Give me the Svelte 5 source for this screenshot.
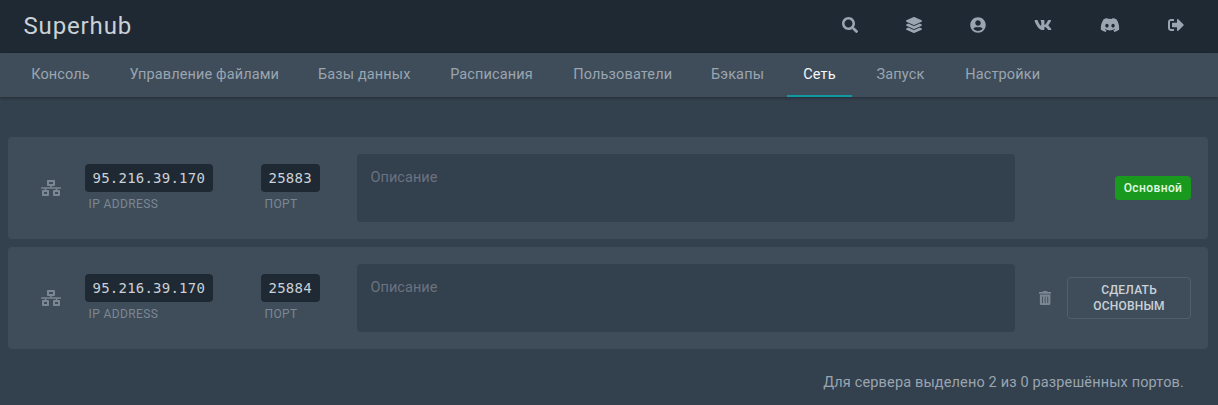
<script>
  const actions = [
    { name: 'Поиск', w: 16, box: '0 0 512 512', d: 'M505 442.7L405.3 343c-4.5-4.5-10.6-7-17-7H372c27.6-35.3 44-79.7 44-128C416 93.1 322.9 0 208 0S0 93.1 0 208s93.1 208 208 208c48.3 0 92.7-16.4 128-44v16.3c0 6.4 2.5 12.5 7 17l99.7 99.7c9.4 9.4 24.6 9.4 33.9 0l28.3-28.3c9.4-9.4 9.4-24.6.1-34zM208 336c-70.7 0-128-57.2-128-128 0-70.7 57.2-128 128-128 70.7 0 128 57.2 128 128 0 70.7-57.2 128-128 128z' },
    { name: 'Серверы', w: 16, box: '0 0 512 512', d: 'M12.41 148.02l232.94 105.67c6.8 3.09 14.49 3.09 21.29 0l232.94-105.67c16.55-7.51 16.55-32.52 0-40.03L266.65 2.31a25.607 25.607 0 0 0-21.29 0L12.41 107.98c-16.55 7.51-16.55 32.53 0 40.04zm487.18 88.28l-58.09-26.33-161.64 73.27c-7.56 3.43-15.59 5.17-23.86 5.17s-16.29-1.74-23.86-5.17L70.51 209.97l-58.1 26.33c-16.55 7.5-16.55 32.5 0 40l232.94 105.59c6.8 3.08 14.49 3.08 21.29 0L499.59 276.3c16.55-7.5 16.55-32.5 0-40zm0 127.8l-57.87-26.23-161.86 73.37c-7.56 3.43-15.59 5.17-23.86 5.17s-16.29-1.74-23.86-5.17L70.29 337.87 12.41 364.1c-16.55 7.5-16.55 32.5 0 40l232.94 105.59c6.8 3.08 14.49 3.08 21.29 0L499.59 404.1c16.55-7.5 16.55-32.5 0-40z' },
    { name: 'Аккаунт', w: 16, box: '0 0 496 512', d: 'M248 8C111 8 0 119 0 256s111 248 248 248 248-111 248-248S385 8 248 8zm0 96c48.6 0 88 39.4 88 88s-39.4 88-88 88-88-39.4-88-88 39.4-88 88-88zm0 344c-58.7 0-111.3-26.6-146.5-68.2 18.8-35.4 55.6-59.8 98.5-59.8 2.4 0 4.8.4 7.1 1.1 13 4.2 26.6 6.9 40.9 6.9 14.3 0 28-2.7 40.9-6.9 2.3-.7 4.7-1.1 7.1-1.1 42.9 0 79.7 24.4 98.5 59.8C359.3 421.4 306.7 448 248 448z' },
    { name: 'VK', w: 18, box: '0 0 576 512', d: 'M545 117.7c3.7-12.5 0-21.7-17.8-21.7h-58.9c-15 0-21.9 7.9-25.6 16.7 0 0-30 73.1-72.4 120.5-13.7 13.7-20 18.1-27.5 18.1-3.7 0-9.4-4.4-9.4-16.9V117.7c0-15-4.2-21.7-16.6-21.7h-92.6c-9.4 0-15 7-15 13.5 0 14.2 21.2 17.5 23.4 57.5v86.8c0 19-3.4 22.5-10.9 22.5-20 0-68.6-73.4-97.4-157.4-5.8-16.3-11.5-22.9-26.6-22.9H38.8c-16.8 0-20.2 7.9-20.2 16.7 0 15.6 20 93.1 93.1 195.5C160.4 378.1 229 416 291.4 416c37.5 0 42.1-8.4 42.1-22.9 0-66.8-3.4-73.1 15.4-73.1 8.7 0 23.7 4.4 58.7 38.1 40 40 46.6 57.9 69 57.9h58.9c16.8 0 25.3-8.4 20.4-25-11.2-34.9-86.9-106.7-90.3-111.5-8.7-11.2-6.2-16.2 0-26.2.1-.1 72-101.3 79.4-135.6z' },
    { name: 'Discord', w: 20, box: '0 0 640 512', d: 'M524.531 69.836a1.5 1.5 0 0 0-.764-.7A485.065 485.065 0 0 0 404.081 32.03a1.816 1.816 0 0 0-1.923.91 337.461 337.461 0 0 0-14.9 30.6 447.848 447.848 0 0 0-134.426 0 309.541 309.541 0 0 0-15.135-30.6 1.89 1.89 0 0 0-1.924-.91A483.689 483.689 0 0 0 116.085 69.137a1.712 1.712 0 0 0-.788.676C39.068 183.651 18.186 294.69 28.43 404.354a2.016 2.016 0 0 0 .765 1.375A487.666 487.666 0 0 0 176.02 479.918a1.9 1.9 0 0 0 2.063-.676A348.2 348.2 0 0 0 208.12 430.4a1.86 1.86 0 0 0-1.019-2.588 321.173 321.173 0 0 1-45.868-21.853 1.885 1.885 0 0 1-.185-3.126c3.082-2.309 6.166-4.711 9.109-7.137a1.819 1.819 0 0 1 1.9-.256c96.229 43.917 200.41 43.917 295.5 0a1.812 1.812 0 0 1 1.924.233c2.944 2.426 6.027 4.851 9.132 7.16a1.884 1.884 0 0 1-.162 3.126 301.407 301.407 0 0 1-45.89 21.83 1.875 1.875 0 0 0-1 2.611 391.055 391.055 0 0 0 30.014 48.815 1.864 1.864 0 0 0 2.063.7A486.048 486.048 0 0 0 610.7 405.729a1.882 1.882 0 0 0 .765-1.352C623.729 277.594 590.933 167.465 524.531 69.836ZM222.491 337.58c-28.972 0-52.844-26.587-52.844-59.239S193.056 219.1 222.491 219.1c29.665 0 53.306 26.82 52.843 59.239C275.334 310.993 251.924 337.58 222.491 337.58Zm195.38 0c-28.971 0-52.843-26.587-52.843-59.239S388.437 219.1 417.871 219.1c29.667 0 53.307 26.82 52.844 59.239C470.715 310.993 447.538 337.58 417.871 337.58Z' },
    { name: 'Выход', w: 16, box: '0 0 512 512', d: 'M497 273L329 441c-15 15-41 4.5-41-17v-96H152c-13.3 0-24-10.7-24-24v-96c0-13.3 10.7-24 24-24h136V88c0-21.4 25.9-32 41-17l168 168c9.3 9.4 9.3 24.6 0 34zM192 436v-40c0-6.6-5.4-12-12-12H96c-17.7 0-32-14.3-32-32V160c0-17.7 14.3-32 32-32h84c6.6 0 12-5.4 12-12V76c0-6.6-5.4-12-12-12H96c-53 0-96 43-96 96v192c0 53 43 96 96 96h84c6.6 0 12-5.4 12-12z' }
  ];

  const tabs = [
    { label: 'Консоль', width: 90 },
    { label: 'Управление файлами', width: 181.5 },
    { label: 'Базы данных', width: 122.5 },
    { label: 'Расписания', width: 116 },
    { label: 'Пользователи', width: 130.5 },
    { label: 'Бэкапы', width: 83 },
    { label: 'Сеть', width: 65, active: true },
    { label: 'Запуск', width: 81 },
    { label: 'Настройки', width: 107.5 }
  ];

  const allocations = [
    { ip: '95.216.39.170', port: '25883', primary: true },
    { ip: '95.216.39.170', port: '25884', primary: false }
  ];
</script>

<div class="page">
  <header>
    <a class="brand" href="#top">Superhub</a>
    <div class="actions">
      {#each actions as a}
        <a href="#top" aria-label={a.name}>
          <svg width={a.w} height="16" viewBox={a.box}><path d={a.d} /></svg>
        </a>
      {/each}
    </div>
  </header>

  <nav>
    {#each tabs as t}
      <a href="#top" class:active={t.active} style:width="{t.width}px">{t.label}</a>
    {/each}
  </nav>

  <main>
    {#each allocations as row}
      <section class="row">
        <svg class="net" width="20" height="16" viewBox="0 0 640 512"><path d="M640 264v-16c0-8.84-7.16-16-16-16H344v-40h72c17.67 0 32-14.33 32-32V32c0-17.67-14.33-32-32-32H224c-17.67 0-32 14.33-32 32v128c0 17.67 14.33 32 32 32h72v40H16c-8.84 0-16 7.16-16 16v16c0 8.84 7.16 16 16 16h104v40H64c-17.67 0-32 14.33-32 32v128c0 17.67 14.33 32 32 32h160c17.67 0 32-14.33 32-32V352c0-17.67-14.33-32-32-32h-56v-40h304v40h-56c-17.67 0-32 14.33-32 32v128c0 17.67 14.33 32 32 32h160c17.67 0 32-14.33 32-32V352c0-17.67-14.33-32-32-32h-56v-40h104c8.84 0 16-7.16 16-16zM256 128V64h128v64H256zm-64 320H96v-64h96v64zm352 0h-96v-64h96v64z" /></svg>
        <div class="field ip">
          <code>{row.ip}</code>
          <span class="caption">IP ADDRESS</span>
        </div>
        <div class="field port">
          <code>{row.port}</code>
          <span class="caption">ПОРТ</span>
        </div>
        <textarea placeholder="Описание"></textarea>
        <div class="controls">
          {#if row.primary}
            <span class="badge">Основной</span>
          {:else}
            <svg class="trash" width="12.25" height="14" viewBox="0 0 448 512"><path d="M32 464a48 48 0 0 0 48 48h288a48 48 0 0 0 48-48V128H32zm272-256a16 16 0 0 1 32 0v224a16 16 0 0 1-32 0zm-96 0a16 16 0 0 1 32 0v224a16 16 0 0 1-32 0zm-96 0a16 16 0 0 1 32 0v224a16 16 0 0 1-32 0zM432 32H312l-9.4-18.7A24 24 0 0 0 281.1 0H166.8a23.72 23.72 0 0 0-21.4 13.3L136 32H16A16 16 0 0 0 0 48v32a16 16 0 0 0 16 16h416a16 16 0 0 0 16-16V48a16 16 0 0 0-16-16z" /></svg>
            <button>СДЕЛАТЬ ОСНОВНЫМ</button>
          {/if}
        </div>
      </section>
    {/each}
    <p>Для сервера выделено 2 из 0 разрешённых портов.</p>
  </main>
</div>

<style>
  :global(body) {
    background: #33404d;
  }
  .page {
    box-sizing: border-box;
    height: 405px;
    overflow: hidden;
    font-family: Roboto, sans-serif;
    background: #33404d;
  }
  a {
    text-decoration: none;
  }
  svg {
    display: block;
    fill: currentColor;
  }
  header {
    display: flex;
    justify-content: space-between;
    height: 53px;
    padding: 0 10px 0 23.5px;
    background: #1f2933;
  }
  .brand {
    font-size: 24px;
    font-weight: 450;
    line-height: 52px;
    letter-spacing: 0.85px;
    color: #cad1d8;
  }
  .actions {
    display: flex;
    height: 50px;
  }
  .actions a {
    display: flex;
    align-items: center;
    padding: 0 24px;
    color: #9aa5b1;
  }
  nav {
    display: flex;
    gap: 8px;
    height: 44px;
    padding-left: 15px;
    background: #3f4d5a;
    box-shadow: 0 1px 3px rgba(0, 0, 0, 0.3);
  }
  nav a {
    box-sizing: border-box;
    flex: none;
    padding-left: 1px;
    text-align: center;
    white-space: nowrap;
    font-size: 14.5px;
    line-height: 43px;
    letter-spacing: 0.13px;
    color: #9aa5b1;
  }
  nav a.active {
    color: #f5f7fa;
    box-shadow: inset 0 -2px #0e9aa0;
  }
  main {
    display: flex;
    flex-direction: column;
    gap: 8px;
    padding: 40px 10px 0 8px;
  }
  .row {
    box-sizing: border-box;
    display: flex;
    align-items: center;
    height: 102px;
    padding: 0 17px 0 33px;
    border-radius: 4px;
    background: #3f4d5a;
  }
  .net {
    flex: none;
    margin-right: 24px;
    color: #7b8793;
  }
  .field {
    display: flex;
    flex: none;
    flex-direction: column;
    align-items: flex-start;
    margin-bottom: 1px;
  }
  .ip {
    width: 176px;
  }
  .port {
    width: 96px;
  }
  code {
    box-sizing: border-box;
    height: 28px;
    padding: 0 7.9px 0 7.5px;
    border-radius: 4px;
    font: 14px/28px "DejaVu Sans Mono", monospace;
    letter-spacing: 0.23px;
    color: #cad1d8;
    background: #1f2933;
  }
  .caption {
    margin: 4px 0 0 3.5px;
    font-size: 12px;
    line-height: 16px;
    letter-spacing: 0.38px;
    color: #7b8793;
  }
  textarea {
    box-sizing: border-box;
    flex: none;
    width: 658px;
    height: 68px;
    padding: 14px 13.5px;
    border: 0;
    border-radius: 4px;
    outline: none;
    resize: none;
    font: 14.5px/20px Roboto, sans-serif;
    letter-spacing: 0.05px;
    color: #cad1d8;
    background: #33404d;
  }
  textarea::placeholder {
    color: #6b7280;
    opacity: 1;
  }
  .controls {
    display: flex;
    flex: 1;
    align-items: center;
    justify-content: flex-end;
  }
  .badge {
    box-sizing: border-box;
    width: 76px;
    height: 24px;
    border-radius: 4px;
    text-align: center;
    font-size: 12px;
    font-weight: 500;
    line-height: 24px;
    letter-spacing: 0.4px;
    color: #e3f9e5;
    background: #199a1e;
  }
  .trash {
    margin-right: 16px;
    color: #7b8793;
  }
  button {
    box-sizing: border-box;
    width: 124px;
    height: 42px;
    padding: 0 16px;
    border: 1px solid #515f6c;
    border-radius: 4px;
    font: 500 12px/16px Roboto, sans-serif;
    letter-spacing: 0.2px;
    color: #cad1d8;
    background: transparent;
  }
  p {
    margin: 16px 24px 0 0;
    text-align: right;
    font-size: 14.5px;
    line-height: 20px;
    letter-spacing: 0.15px;
    color: #9aa5b1;
  }
</style>
